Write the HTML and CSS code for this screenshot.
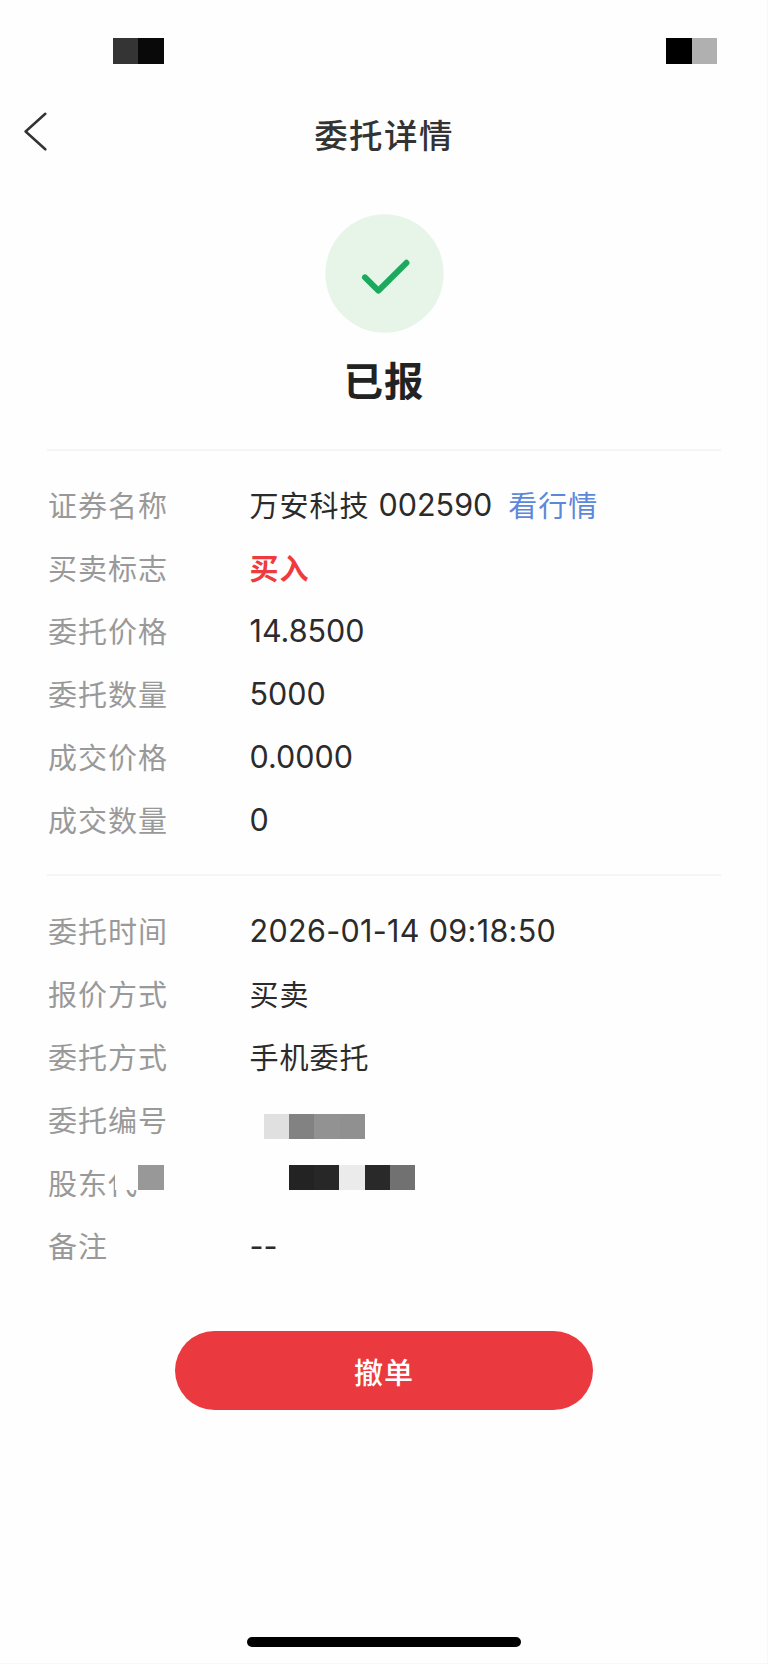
FILE: index.html
```html
<!DOCTYPE html>
<html lang="zh-CN">
<head>
<meta charset="utf-8">
<meta name="viewport" content="width=device-width, initial-scale=1">
<title>委托详情</title>
<link rel="stylesheet" href="styles.css">
</head>
<body>
<div class="screen">
  <div class="status-bar">
    <div class="mask"><i class="c34"></i><i class="c09"></i></div>
    <div class="mask"><i class="c00"></i><i class="cb0"></i></div>
  </div>
  <header class="nav">
    <svg class="back" width="24" height="40" viewBox="0 0 24 40" fill="none" stroke="#333" stroke-width="2.5" stroke-linecap="round" stroke-linejoin="round"><path d="M22.3 2.8 L2.6 20.5 L22.3 38.3"/></svg>
    <h1 class="title">委托详情</h1>
  </header>
  <section class="result">
    <svg class="result-icon" width="119" height="119" viewBox="0 0 119 119" fill="none"><circle cx="59.5" cy="59.5" r="59.2" fill="#e7f5e9"/><path d="M40 63.4 L53.4 76.6 L81.4 48.8" stroke="#1baa5d" stroke-width="6" stroke-linecap="round" stroke-linejoin="round"/></svg>
    <h2 class="result-text">已报</h2>
  </section>
  <dl class="group">
    <div class="row"><dt>证券名称</dt><dd>万安科技<span class="num code">002590</span><a class="link">看行情</a></dd></div>
    <div class="row"><dt>买卖标志</dt><dd class="buy">买入</dd></div>
    <div class="row"><dt>委托价格</dt><dd><span class="num">14.8500</span></dd></div>
    <div class="row"><dt>委托数量</dt><dd><span class="num">5000</span></dd></div>
    <div class="row"><dt>成交价格</dt><dd><span class="num">0.0000</span></dd></div>
    <div class="row"><dt>成交数量</dt><dd><span class="num">0</span></dd></div>
  </dl>
  <dl class="group group-second">
    <div class="row"><dt>委托时间</dt><dd><span class="num time">2026-01-14 09:18:50</span></dd></div>
    <div class="row"><dt>报价方式</dt><dd>买卖</dd></div>
    <div class="row"><dt>委托方式</dt><dd>手机委托</dd></div>
    <div class="row"><dt>委托编号</dt><dd><div class="mask mask-number"><i class="ce0"></i><i class="c80"></i><i class="c91"></i><i class="c90"></i></div></dd></div>
    <div class="row"><dt>股东代<div class="mask mask-label"><i class="cfe"></i><i class="c97"></i></div></dt><dd><div class="mask mask-account"><i class="c23"></i><i class="c26"></i><i class="ceb"></i><i class="c28"></i><i class="c70"></i></div></dd></div>
    <div class="row"><dt>备注</dt><dd><span class="num">--</span></dd></div>
  </dl>
  <button class="cancel" type="button">撤单</button>
  <div class="home-bar"></div>
</div>
</body>
</html>
```

FILE: styles.css
```css
* { box-sizing: border-box; }
body { margin: 0; background: #fefefe; }
h1, h2, dl, dd { margin: 0; }

.screen {
  display: flex;
  flex-direction: column;
  width: 768px;
  height: 1664px;
  overflow: hidden;
  box-shadow: inset -1px -1px 0 #f8f8f8;
  background: #fefefe;
  color: #2b2b2b;
  font-family: Inter, "Noto Sans CJK SC", sans-serif;
  font-size: 29px;
  letter-spacing: 1px;
}

.status-bar {
  display: flex;
  justify-content: space-between;
  height: 102px;
  padding: 38px 51.3px 0 113.3px;
}

/* Pixelated blocks over private data */
.mask { display: flex; height: 25.6px; }
.mask i { width: 25.2px; height: 100%; }
.c00 { background: #000; }
.c09 { background: #090909; }
.c23 { background: #232323; }
.c26 { background: #272727; }
.c28 { background: #292929; }
.c34 { background: #343434; }
.c70 { background: #717171; }
.c80 { background: #828282; }
.c90 { background: #909090; }
.c91 { background: #929292; }
.c97 { background: #989898; }
.cb0 { background: #b0b0b0; }
.ce0 { background: #e0e0e0; }
.ceb { background: #ebebeb; }
.mask .cfe { width: 23.2px; background: #fefefe; }

.nav {
  display: grid;
  grid-template-columns: 1fr auto 1fr;
  height: 112px;
  padding: 9px 23px 0;
}
.title {
  height: 50px;
  color: #333;
  font-size: 33.5px;
  font-weight: 500;
  line-height: 51px;
  letter-spacing: 1.4px;
}

.result {
  display: flex;
  flex-direction: column;
  align-items: center;
  height: 235px;
}
.result-text {
  margin-top: 19px;
  color: #222;
  font-size: 39.5px;
  font-weight: 700;
  line-height: 60px;
}

.group {
  height: 425px;
  margin: 0 47px;
  padding: 24px 0 0 1px;
  border-top: 2px solid #f5f5f5;
}
.group-second { height: 457px; padding-top: 25px; }
.row {
  display: flex;
  height: 63px;
  line-height: 63px;
  white-space: nowrap;
}
.row dt { position: relative; width: 201.5px; color: #999; }
.num {
  display: inline-block;
  height: 63px;
  font-size: 30.5px;
  line-height: 60px;
  letter-spacing: 0;
  vertical-align: top;
}
.code { margin-left: 9px; }
.time { letter-spacing: 0.32px; }
.buy { color: #ef3a40; font-weight: 700; }
.link { margin-left: 16px; color: #5c88dc; }
.mask-number { margin: 23.5px 0 0 14.5px; }
.mask-account { margin: 11.5px 0 0 39.5px; }
.mask-label { position: absolute; top: 11.5px; left: 67.3px; }

.cancel {
  align-self: center;
  width: 418px;
  height: 79px;
  border: 0;
  border-radius: 40px;
  background: #ea3a40;
  color: #fff;
  font: inherit;
  font-weight: 500;
  letter-spacing: 1px;
}
.home-bar {
  align-self: center;
  width: 274px;
  height: 10px;
  margin-top: auto;
  margin-bottom: 17px;
  border-radius: 5px;
  background: #000;
}
```
